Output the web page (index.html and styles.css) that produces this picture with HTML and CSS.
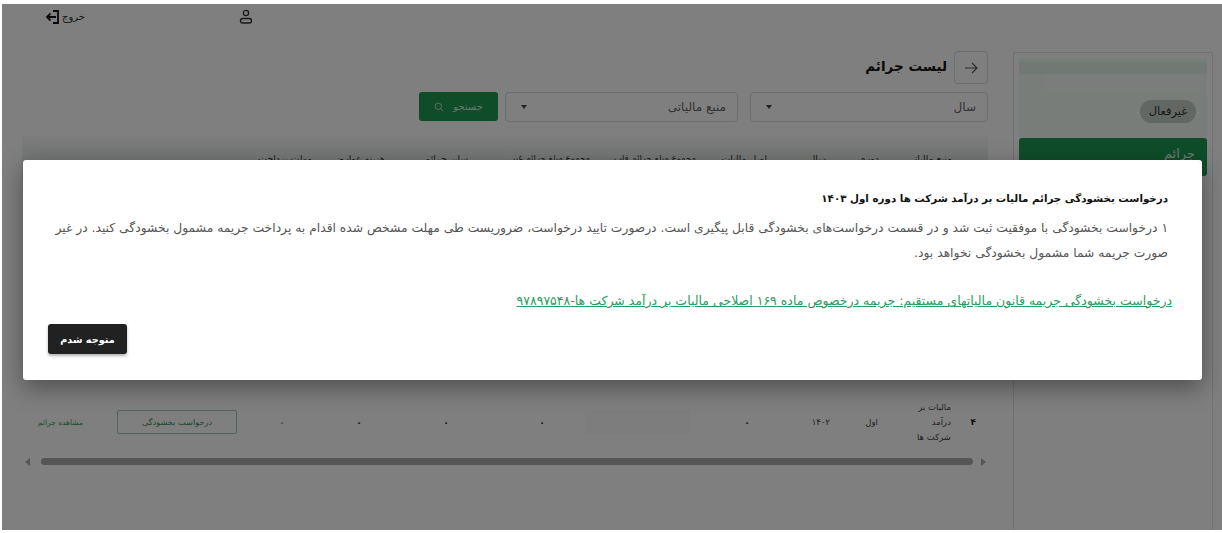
FILE: index.html
```html
<!DOCTYPE html>
<html lang="fa" dir="rtl">
<head>
<meta charset="utf-8">
<title>لیست جرائم</title>
<link rel="stylesheet" href="styles.css">
</head>
<body>
<div class="app">
  <header class="topbar">
    <svg class="user-icon" viewBox="0 0 16 16" width="16" height="16" aria-hidden="true"><circle cx="8" cy="4" r="2.6"/><rect x="2.5" y="9.5" width="11" height="4.5" rx="2.2"/></svg>
    <div class="logout">
      <span>خروج</span>
      <svg viewBox="0 0 16 16" width="16" height="16" aria-hidden="true"><path d="M8 2h5v12H8"/><path d="M11 8H2M5.5 4.5 2 8l3.5 3.5"/></svg>
    </div>
  </header>
  <div class="layout">
    <aside class="sidebar">
      <div class="profile">
        <div class="profile-bar"></div>
        <div class="profile-name"></div>
        <span class="pill">غیرفعال</span>
      </div>
      <div class="side-active">جرائم</div>
    </aside>
    <main class="content">
      <div class="title-row">
        <div class="back"><svg viewBox="0 0 16 16" width="16" height="16" aria-hidden="true"><path d="M2 8h12M9 3l5 5-5 5"/></svg></div>
        <h1>لیست جرائم</h1>
      </div>
      <div class="filters">
        <div class="select year"><span>سال</span><i class="caret"></i></div>
        <div class="select source"><span>منبع مالیاتی</span><i class="caret"></i></div>
        <button class="search"><span>جستجو</span><svg viewBox="0 0 12 12" width="10" height="10" aria-hidden="true"><circle cx="5.2" cy="5.2" r="3.8"/><path d="m8 8 3 3"/></svg></button>
      </div>
      <div class="table">
        <div class="thead">
          <span></span><span>منبع مالیاتی</span><span>دوره</span><span>سال</span><span>اصل مالیات</span><span class="long">مجموع مبلغ جرائم قاب...</span><span class="long">مجموع مبلغ جرائم غیر...</span><span>سایر جرائم</span><span>هزینه عوارض</span><span>مهلت پرداخت</span>
        </div>
        <div class="spacer"></div>
        <div class="trow">
          <b>۴</b>
          <span class="name">مالیات بر درآمد شرکت ها</span>
          <span>اول</span>
          <span>۱۴۰۲</span>
          <span class="dot">۰</span>
          <span class="blank"></span>
          <span class="dot">۰</span>
          <span class="dot">۰</span>
          <span class="dot">۰</span>
          <span class="dot faint">۰</span>
          <span class="req">درخواست بخشودگی</span>
          <span class="view">مشاهده جرائم</span>
        </div>
        <div class="scroll">
          <i class="arrow right"></i>
          <div class="thumb"></div>
          <i class="arrow left"></i>
        </div>
      </div>
    </main>
  </div>
  <div class="overlay">
    <section class="modal">
      <h2>درخواست بخشودگی جرائم مالیات بر درآمد شرکت ها دوره اول ۱۴۰۳</h2>
      <p>۱ درخواست بخشودگی با موفقیت ثبت شد و در قسمت درخواست‌های بخشودگی قابل پیگیری است. درصورت تایید درخواست، ضروریست طی مهلت مشخص شده اقدام به پرداخت جریمه مشمول بخشودگی کنید. در غیر صورت جریمه شما مشمول بخشودگی نخواهد بود.</p>
      <a href="#">درخواست بخشودگی جریمه قانون مالیاتهای مستقیم: جریمه درخصوص ماده ۱۶۹ اصلاحی مالیات بر درآمد شرکت ها-۹۷۸۹۷۵۴۸</a>
      <div class="modal-foot"><button class="ok">متوجه شدم</button></div>
    </section>
  </div>
</div>
</body>
</html>
```
FILE: styles.css
```css
* { box-sizing: border-box; }
html, body { height: 100%; }
body {
  margin: 0;
  padding: 4px 0 3px 2px;
  background: #fff;
  overflow: hidden;
  font-family: "DejaVu Sans", "Noto Sans", sans-serif;
  color: #222;
}
.app { position: relative; height: 526px; overflow: hidden; background: #fff; }

.topbar { height: 25px; display: flex; align-items: center; justify-content: flex-end; gap: 153px; padding-left: 43px; }
.logout { display: flex; align-items: center; gap: 1px; font-size: 10px; }
.user-icon { fill: none; stroke: #333; stroke-width: 1.4; }
.logout svg { fill: none; stroke: #111; stroke-width: 1.8; }
.logout span { color: #333; }

.layout { display: flex; gap: 25px; padding: 23px 9px 0 20px; height: 501px; }
.sidebar { width: 200px; flex: none; height: 478px; border: 1px solid #e4e4e4; border-bottom: 0; padding: 5px; }
.profile { height: 80px; background: #f0faf4; padding: 4px 5px; display: flex; flex-direction: column; }
.profile-bar { height: 12px; background: #e2f3e9; margin: 0 -5px; }
.profile-name { height: 18px; width: 158px; background: #f7fbf9; }
.pill { align-self: flex-start; margin: 8px 6px 0 0; width: 56px; height: 23px; border-radius: 12px; background: #c6cec9; font-size: 11.5px; line-height: 23px; text-align: center; color: #333; }
.side-active { height: 38px; background: #1f9a52; border-radius: 3px; color: #d9f5e4; font-size: 13px; padding: 8px 12px; }

.content { flex: 1; min-width: 0; display: flex; flex-direction: column; }
.title-row { display: flex; align-items: center; gap: 7px; height: 33px; margin-top: -1px; }
.back { width: 34px; height: 33px; border: 1px solid #ddd; border-radius: 4px; display: flex; align-items: center; justify-content: center; }
.back svg { fill: none; stroke: #555; stroke-width: 1.2; }
h1 { margin: 0 0 3px; font-size: 13.5px; font-weight: 700; color: #111; }
.filters { display: flex; gap: 7px; margin-top: 8px; height: 30px; }
.select { height: 30px; border: 1px solid #ddd; border-radius: 4px; display: flex; align-items: center; justify-content: space-between; padding: 0 11px; font-size: 12px; color: #666; }
.year { width: 238px; margin-left: 5px; }
.source { width: 233px; }
.caret { width: 0; height: 0; border: 3px solid transparent; border-top: 4px solid #444; border-bottom: 0; margin-left: 4px; }
.search { width: 79px; height: 29px; background: #1f9a52; border: 0; border-radius: 3px; color: #cfeedd; display: flex; align-items: center; justify-content: center; gap: 9px; font: 10px "DejaVu Sans", sans-serif; padding: 0; }
.search svg { fill: none; stroke: #cfeedd; stroke-width: 1; }

.table { margin-top: 14px; }
.thead { display: grid; grid-template-columns: 36px 73px 53px 59px 71px 106px 122px 83px 73px 290px; height: 44px; background: linear-gradient(#f8f8f8, #d6e4dc); font-size: 9.3px; color: #333; align-items: center; white-space: nowrap; }
.thead .long { font-size: 8.5px; }
.spacer { height: 219px; }
.trow { display: grid; grid-template-columns: 37px 73px 48px 80px 60px 145px 96px 87px 77px 48px 154px 61px; height: 46px; align-items: center; font-size: 8.5px; color: #444; }
.trow b { font-size: 9px; padding-right: 12px; font-weight: 700; color: #222; }
.name { width: 40px; line-height: 15px; }
.dot { font-size: 10px; font-weight: 700; }
.faint { color: #999; }
.blank { height: 24px; width: 105px; background: #fafafa; }
.req { width: 120px; height: 24px; border: 1px solid #a8c8b6; border-radius: 2px; color: #3c8a5e; display: flex; align-items: center; justify-content: center; font-size: 8.2px; }
.view { color: #2e9a5e; white-space: nowrap; font-size: 7.5px; }
.scroll { display: flex; align-items: center; height: 7px; margin-top: 13px; padding: 0 2px; gap: 5px; }
.thumb { flex: none; width: 932px; height: 7px; border-radius: 4px; background: #aaa; margin: 0 3px 0 6px; }
.arrow { width: 0; height: 0; border: 4px solid transparent; }
.arrow.right { border-left: 5px solid #aaa; border-right: 0; }
.arrow.left { border-right: 5px solid #aaa; border-left: 0; }

.overlay { position: absolute; inset: 0; background: rgba(0, 0, 0, .5); display: flex; align-items: flex-start; justify-content: center; padding: 156px 20px 0 21px; }
.modal { width: 1179px; height: 220px; background: #fff; border-radius: 3px; box-shadow: 0 8px 24px rgba(0,0,0,.38); padding: 30px 34px 0 25px; color: #333; display: flex; flex-direction: column; }
h2 { margin: 0; font-size: 10.3px; line-height: 16px; font-weight: 700; color: #111; }
p { margin: 10px 0 0; font-size: 12.3px; line-height: 25px; color: #555; }
a { margin: 24px -4px 0 0; font-size: 12.5px; line-height: 22px; color: #2a9c60; text-decoration: underline; align-self: flex-start; white-space: nowrap; }
.modal-foot { margin-top: 12px; display: flex; justify-content: flex-end; }
.ok { width: 79px; height: 30px; border: 0; border-radius: 3px; background: #212121; color: #fff; font: 700 9.7px "DejaVu Sans", sans-serif; box-shadow: 0 2px 3px rgba(0,0,0,.3); padding: 0; }
```
